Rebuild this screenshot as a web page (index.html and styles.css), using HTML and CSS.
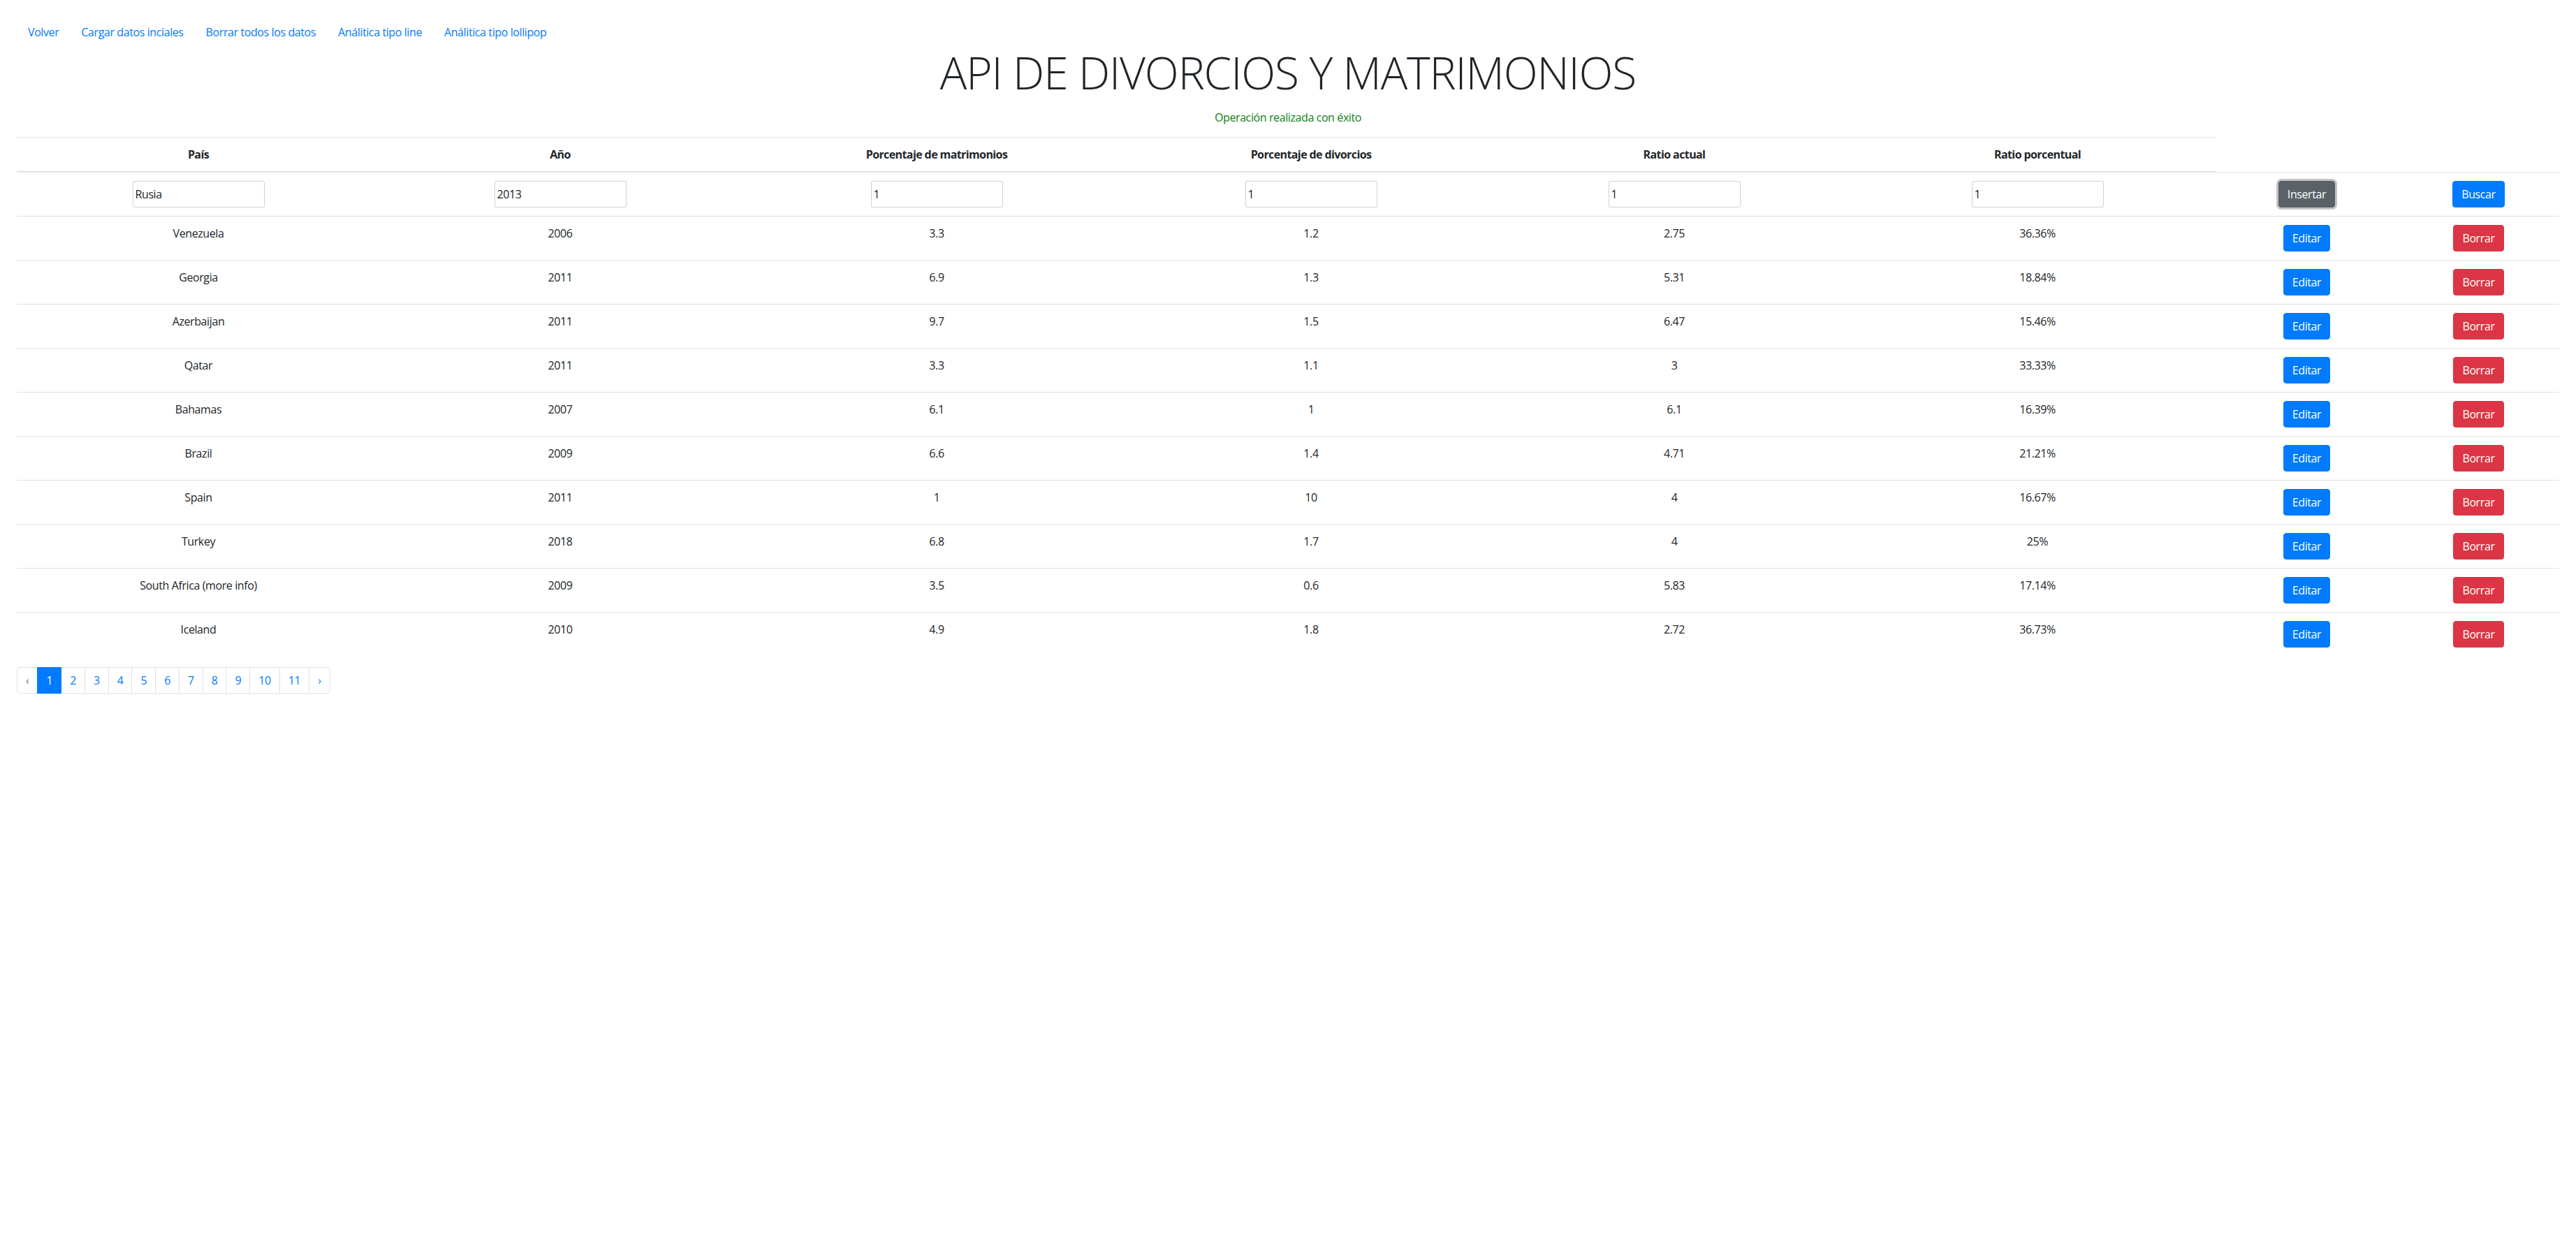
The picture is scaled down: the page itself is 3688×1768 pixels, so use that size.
FILE: index.html
```html
<!DOCTYPE html>
<html lang="es">
<head>
<meta charset="utf-8">
<title>API de divorcios y matrimonios</title>
<link rel="stylesheet" href="styles.css">
</head>
<body>
<main class="page">
  <ul class="nav">
    <li><a class="nav-link" href="#">Volver</a></li>
    <li><a class="nav-link" href="#">Cargar datos inciales</a></li>
    <li><a class="nav-link" href="#">Borrar todos los datos</a></li>
    <li><a class="nav-link" href="#">Análitica tipo line</a></li>
    <li><a class="nav-link" href="#">Análitica tipo lollipop</a></li>
  </ul>

  <h1 class="title">API DE DIVORCIOS Y MATRIMONIOS</h1>
  <p class="status">Operación realizada con éxito</p>

  <table class="table">
    <colgroup>
      <col class="col-pais">
      <col class="col-anio">
      <col class="col-mat">
      <col class="col-div">
      <col class="col-ratio">
      <col class="col-pct">
      <col class="col-act1">
      <col class="col-act2">
    </colgroup>
    <thead>
      <tr>
        <th>País</th>
        <th>Año</th>
        <th>Porcentaje de matrimonios</th>
        <th>Porcentaje de divorcios</th>
        <th>Ratio actual</th>
        <th>Ratio porcentual</th>
      </tr>
    </thead>
    <tbody>
      <tr>
        <td><input class="field" type="text" value="Rusia"></td>
        <td><input class="field" type="text" value="2013"></td>
        <td><input class="field" type="text" value="1"></td>
        <td><input class="field" type="text" value="1"></td>
        <td><input class="field" type="text" value="1"></td>
        <td><input class="field" type="text" value="1"></td>
        <td><button class="btn btn-secondary-focus">Insertar</button></td>
        <td><button class="btn btn-primary">Buscar</button></td>
      </tr>
      <tr><td>Venezuela</td><td>2006</td><td>3.3</td><td>1.2</td><td>2.75</td><td>36.36%</td><td><button class="btn btn-primary">Editar</button></td><td><button class="btn btn-danger">Borrar</button></td></tr>
      <tr><td>Georgia</td><td>2011</td><td>6.9</td><td>1.3</td><td>5.31</td><td>18.84%</td><td><button class="btn btn-primary">Editar</button></td><td><button class="btn btn-danger">Borrar</button></td></tr>
      <tr><td>Azerbaijan</td><td>2011</td><td>9.7</td><td>1.5</td><td>6.47</td><td>15.46%</td><td><button class="btn btn-primary">Editar</button></td><td><button class="btn btn-danger">Borrar</button></td></tr>
      <tr><td>Qatar</td><td>2011</td><td>3.3</td><td>1.1</td><td>3</td><td>33.33%</td><td><button class="btn btn-primary">Editar</button></td><td><button class="btn btn-danger">Borrar</button></td></tr>
      <tr><td>Bahamas</td><td>2007</td><td>6.1</td><td>1</td><td>6.1</td><td>16.39%</td><td><button class="btn btn-primary">Editar</button></td><td><button class="btn btn-danger">Borrar</button></td></tr>
      <tr><td>Brazil</td><td>2009</td><td>6.6</td><td>1.4</td><td>4.71</td><td>21.21%</td><td><button class="btn btn-primary">Editar</button></td><td><button class="btn btn-danger">Borrar</button></td></tr>
      <tr><td>Spain</td><td>2011</td><td>1</td><td>10</td><td>4</td><td>16.67%</td><td><button class="btn btn-primary">Editar</button></td><td><button class="btn btn-danger">Borrar</button></td></tr>
      <tr><td>Turkey</td><td>2018</td><td>6.8</td><td>1.7</td><td>4</td><td>25%</td><td><button class="btn btn-primary">Editar</button></td><td><button class="btn btn-danger">Borrar</button></td></tr>
      <tr><td>South Africa (more info)</td><td>2009</td><td>3.5</td><td>0.6</td><td>5.83</td><td>17.14%</td><td><button class="btn btn-primary">Editar</button></td><td><button class="btn btn-danger">Borrar</button></td></tr>
      <tr><td>Iceland</td><td>2010</td><td>4.9</td><td>1.8</td><td>2.72</td><td>36.73%</td><td><button class="btn btn-primary">Editar</button></td><td><button class="btn btn-danger">Borrar</button></td></tr>
    </tbody>
  </table>

  <ul class="pagination">
    <li class="page-item disabled"><a class="page-link" href="#">‹</a></li>
    <li class="page-item active"><a class="page-link" href="#">1</a></li>
    <li class="page-item"><a class="page-link" href="#">2</a></li>
    <li class="page-item"><a class="page-link" href="#">3</a></li>
    <li class="page-item"><a class="page-link" href="#">4</a></li>
    <li class="page-item"><a class="page-link" href="#">5</a></li>
    <li class="page-item"><a class="page-link" href="#">6</a></li>
    <li class="page-item"><a class="page-link" href="#">7</a></li>
    <li class="page-item"><a class="page-link" href="#">8</a></li>
    <li class="page-item"><a class="page-link" href="#">9</a></li>
    <li class="page-item"><a class="page-link" href="#">10</a></li>
    <li class="page-item"><a class="page-link" href="#">11</a></li>
    <li class="page-item"><a class="page-link" href="#">›</a></li>
  </ul>
</main>
</body>
</html>
```

FILE: styles.css
```css
*, *::before, *::after { box-sizing: border-box; }

html, body { margin: 0; }

body {
  font-family: "Open Sans", "Noto Sans", "Liberation Sans", sans-serif;
  font-size: 16px;
  line-height: 1.5;
  letter-spacing: -0.4px;
  color: #212529;
  background: #fff;
}

.page { padding: 26px 24px 0; }

/* nav */
.nav {
  display: flex;
  list-style: none;
  margin: 0;
  padding: 0;
}
.nav-link {
  display: block;
  padding: 8px 16px;
  color: #007bff;
  text-decoration: none;
}

/* title */
.title {
  margin: 0;
  text-align: center;
  font-weight: 300;
  font-size: 64px;
  line-height: 76px;
  letter-spacing: -1.1px;
  color: #212529;
}

.status {
  margin: 14px 0 16px;
  text-align: center;
  color: #0f7f16;
}

/* table */
.table {
  width: 100%;
  border-collapse: collapse;
  table-layout: fixed;
  margin-bottom: 16px;
}
.col-pais { width: 520px; }
.col-anio { width: 516px; }
.col-mat { width: 562px; }
.col-div { width: 510px; }
.col-ratio { width: 530px; }
.col-pct { width: 510px; }
.col-act1 { width: 261px; }
.col-act2 { width: 231px; }

.table th,
.table td {
  padding: 12px;
  text-align: center;
  vertical-align: top;
  border-top: 1px solid #dee2e6;
}
.table thead th {
  vertical-align: bottom;
  border-bottom: 2px solid #dee2e6;
  font-weight: 700;
  letter-spacing: -0.6px;
}

/* inputs */
.field {
  display: block;
  margin: 0 auto;
  width: 189px;
  height: 38px;
  padding: 0 3px;
  font: inherit;
  letter-spacing: inherit;
  color: #212529;
  background: #fff;
  border: 1px solid #cdd2d7;
  border-radius: 2px;
}

/* buttons */
.btn {
  display: inline-block;
  vertical-align: top;
  padding: 6px 12px;
  font: inherit;
  line-height: 24px;
  letter-spacing: inherit;
  color: #fff;
  border: 1px solid transparent;
  border-radius: 4px;
  cursor: pointer;
}
.btn-primary { background: #007bff; border-color: #007bff; }
.btn-danger { background: #dc3545; border-color: #dc3545; }
.btn-secondary-focus {
  background: #5a6268;
  border-color: #545b62;
  box-shadow: 0 0 0 3px rgba(130, 138, 145, 0.5);
}

/* pagination */
.pagination {
  display: flex;
  list-style: none;
  margin: 0;
  padding: 0;
}
.page-link {
  display: block;
  margin-left: -1px;
  padding: 8px 12px;
  line-height: 20px;
  color: #007bff;
  background: #fff;
  border: 1px solid #dee2e6;
  text-decoration: none;
}
.page-item:first-child .page-link {
  margin-left: 0;
  border-radius: 4px 0 0 4px;
}
.page-item:last-child .page-link { border-radius: 0 4px 4px 0; }
.page-item.active .page-link {
  position: relative;
  z-index: 1;
  color: #fff;
  background: #007bff;
  border-color: #007bff;
}
.page-item.disabled .page-link { color: #6c757d; }
```
